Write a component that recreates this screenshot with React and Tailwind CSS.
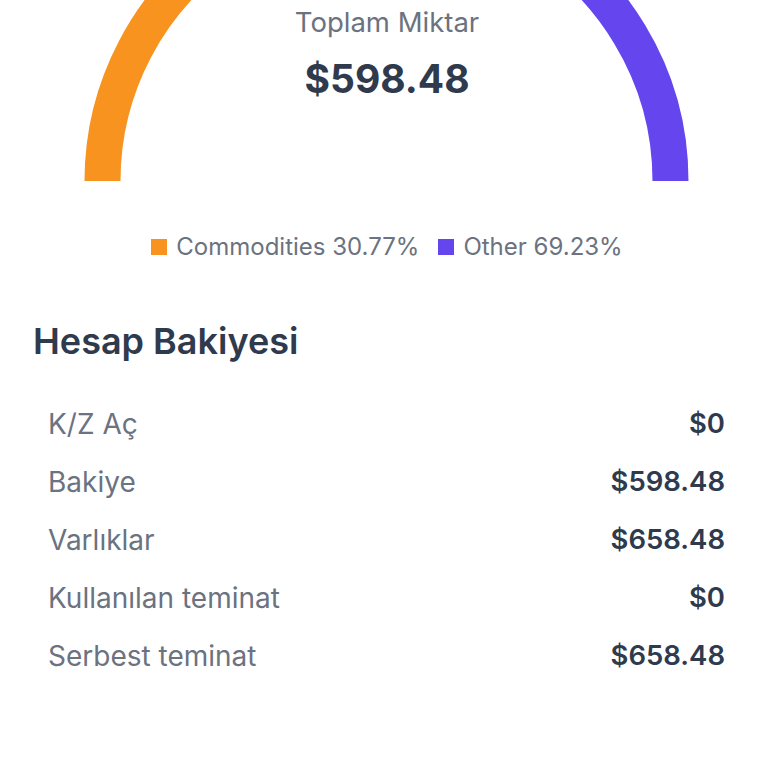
const SEGMENTS = [
  { label: 'Commodities', pct: 30.77, color: '#f7931e' },
  { label: 'Other', pct: 69.23, color: '#6445ee' },
]

const ROWS = [
  { label: 'K/Z Aç', value: '$0' },
  { label: 'Bakiye', value: '$598.48' },
  { label: 'Varlıklar', value: '$658.48' },
  { label: 'Kullanılan teminat', value: '$0' },
  { label: 'Serbest teminat', value: '$658.48' },
]

// yarım daire gauge
function Gauge() {
  const cx = 386.5
  const cy = 181
  const r = 284
  let start = 180
  const arcs = SEGMENTS.map((s) => {
    const sweep = (s.pct / 100) * 180
    const a0 = (start * Math.PI) / 180
    const a1 = ((start - sweep) * Math.PI) / 180
    start -= sweep
    const x0 = cx + r * Math.cos(a0)
    const y0 = cy - r * Math.sin(a0)
    const x1 = cx + r * Math.cos(a1)
    const y1 = cy - r * Math.sin(a1)
    return { d: `M ${x0} ${y0} A ${r} ${r} 0 0 1 ${x1} ${y1}`, color: s.color }
  })
  return (
    <svg width="768" height="181" viewBox="0 0 768 181" className="block">
      {arcs.map((a, i) => (
        <path key={i} d={a.d} fill="none" stroke={a.color} strokeWidth="36" />
      ))}
    </svg>
  )
}

export default function App() {
  return (
    <div
      className="w-[768px] h-[768px] bg-white overflow-hidden"
      style={{ fontFamily: 'Inter, "Noto Sans", sans-serif' }}
    >
      {/* grafik */}
      <div className="relative h-[181px]">
        <Gauge />
        <div className="absolute inset-x-0 top-[6px] pl-[6px] flex flex-col items-center">
          <span className="text-[27.5px] leading-[32px] text-[#6b7280]">Toplam Miktar</span>
          <span className="mt-[19px] text-[39px] leading-[44px] font-bold text-[#2f3a4d]">$598.48</span>
        </div>
      </div>

      {/* legend */}
      <div className="mt-[52px] pl-[6px] flex justify-center items-center gap-[19px]">
        {SEGMENTS.map((s) => (
          <div key={s.label} className="flex items-center gap-[9px]">
            <span className="w-4 h-4" style={{ backgroundColor: s.color }} />
            <span className="text-[24px] leading-[28px] text-[#6b7280]">
              {s.label} {s.pct}%
            </span>
          </div>
        ))}
      </div>

      {/* Hesap Bakiyesi */}
      <div className="mt-[59px] pl-[33px] pr-[28px]">
        <h2 className="text-[36px] leading-[42px] font-semibold text-[#2f3a4d]">Hesap Bakiyesi</h2>
        <div className="mt-[33px]">
          {ROWS.map((row) => (
            <div key={row.label} className="h-[58px] px-[15px] flex items-center justify-between">
              <span className="text-[28px] text-[#6b7280]">{row.label}</span>
              <span className="text-[27.5px] font-semibold text-[#2f3a4d]">{row.value}</span>
            </div>
          ))}
        </div>
      </div>
    </div>
  )
}
